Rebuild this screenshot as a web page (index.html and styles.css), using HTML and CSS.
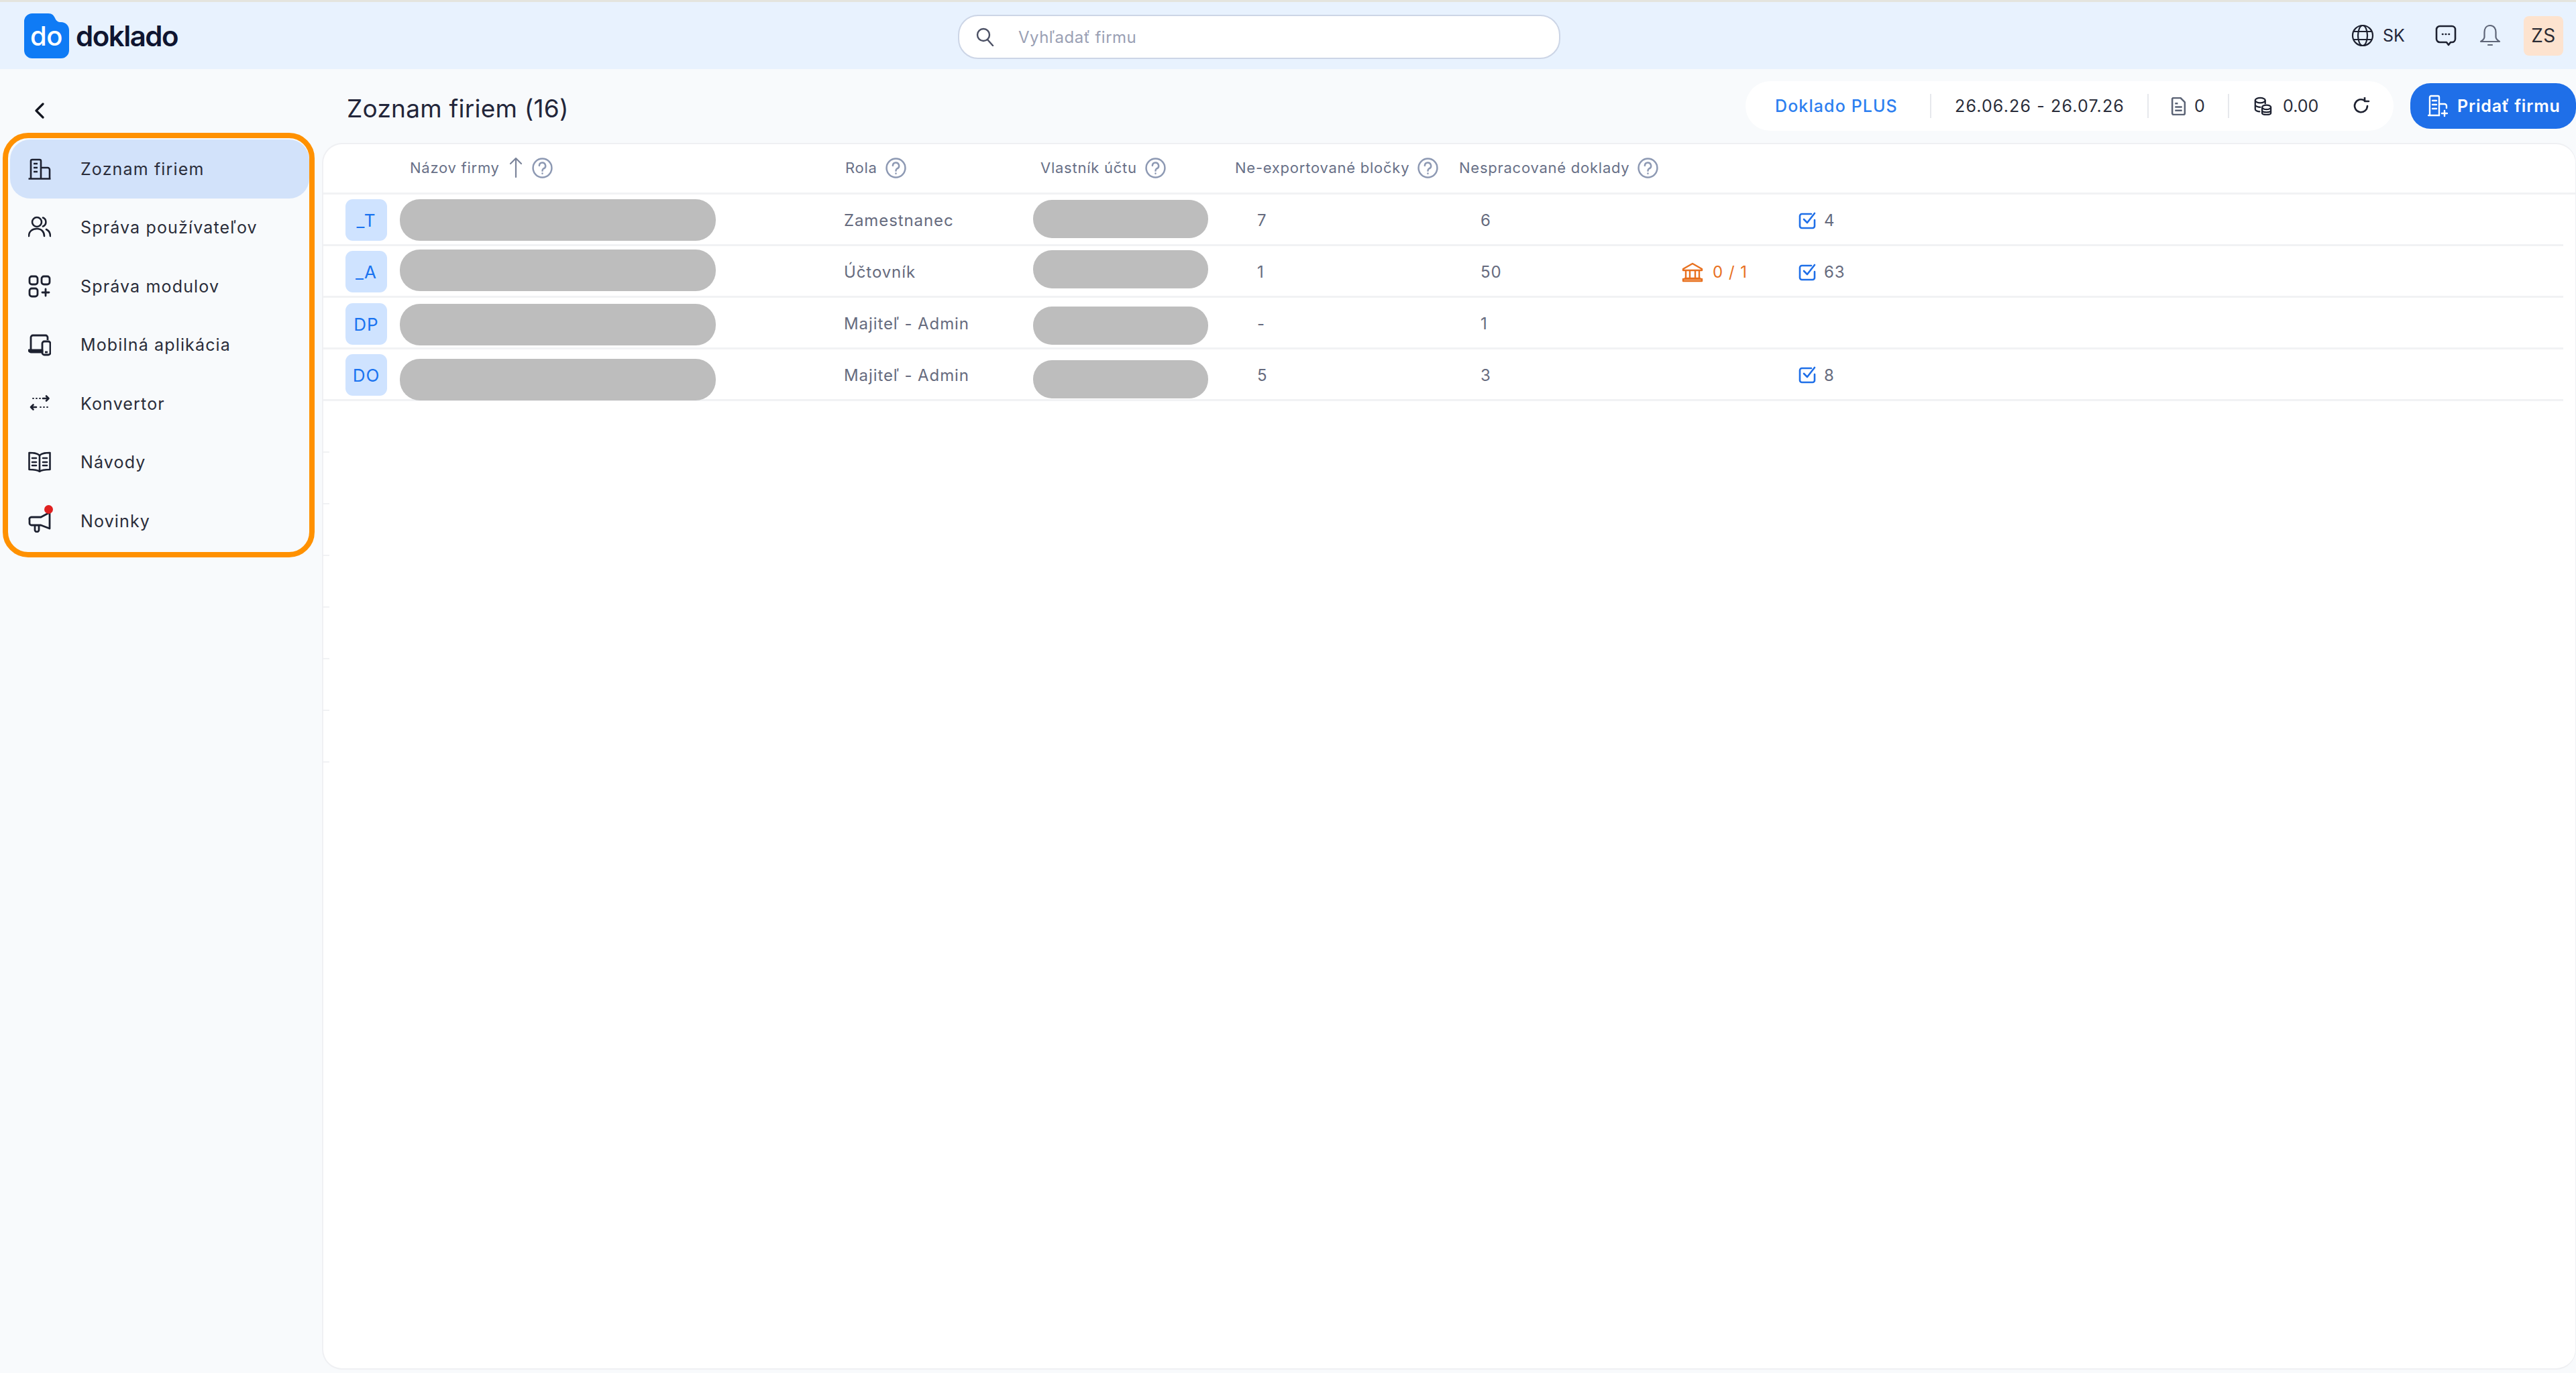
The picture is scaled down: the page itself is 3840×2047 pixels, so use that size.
FILE: index.html
```html
<!DOCTYPE html>
<html lang="sk">
<head>
<meta charset="utf-8">
<title>Doklado</title>
<link rel="stylesheet" href="styles.css">
</head>
<body>
<div class="app">
  <header class="topbar">
    <div class="brand">
      <svg class="logo" viewBox="0 0 67 67"><path d="M12 0H36C42 0 44 3 46 7C48 11 50 13 55 13C62 13 67 18 67 25V55A12 12 0 0 1 55 67H12A12 12 0 0 1 0 55V12A12 12 0 0 1 12 0Z" fill="#0f7bf5"/><text x="33" y="48" text-anchor="middle" class="logo-do">do</text></svg>
      <span class="brand-name">doklado</span>
    </div>
    <div class="search">
      <svg class="search-icon" viewBox="0 0 28 28" fill="none" stroke="#4b5064" stroke-width="2.4" stroke-linecap="round"><circle cx="12" cy="11" r="9"/><path d="M18 18L26 27"/></svg>
      <span class="search-text">Vyhľadať firmu</span>
    </div>
    <div class="top-actions">
      <svg class="ic-globe" viewBox="0 0 34 34" fill="none" stroke="#1d2130" stroke-width="2.2"><circle cx="17" cy="17" r="15"/><ellipse cx="17" cy="17" rx="7" ry="15"/><path d="M3 11H31M3 23H31"/></svg>
      <span class="lang">SK</span>
      <svg class="ic-chat" viewBox="0 0 32 32" fill="none" stroke="#1d2130" stroke-width="2.6" stroke-linejoin="round"><path d="M7 2H25A5 5 0 0 1 30 7V21A5 5 0 0 1 25 26H23L20 30L17 26H7A5 5 0 0 1 2 21V7A5 5 0 0 1 7 2Z"/><path d="M11 14H11.5M15.7 14H16.2M20.5 14H21" stroke-linecap="round"/></svg>
      <svg class="ic-bell" viewBox="0 0 34 34" fill="none" stroke="#5f6678" stroke-width="2.2" stroke-linejoin="round" stroke-linecap="round"><path d="M17 2C11 2 8.500 7 8.500 12V19C8.500 22 6 24 3 26H31C28 24 25.500 22 25.500 19V12C25.500 7 23 2 17 2Z"/><path d="M14 31H20"/></svg>
      <span class="user-badge">ZS</span>
    </div>
  </header>
  <div class="body">
    <aside class="sidebar">
      <div class="back-row">
        <svg class="ic-back" viewBox="0 0 16 24" fill="none" stroke="#12151f" stroke-width="3.2" stroke-linecap="round" stroke-linejoin="round"><path d="M13 2L3 12L13 22"/></svg>
      </div>
      <nav class="menu">
        <a class="menu-item active">
          <svg class="menu-icon" viewBox="0 0 34 34" fill="none" stroke="#1d2130" stroke-width="2.6"><path d="M4 31V5A2 2 0 0 1 6 3H17A2 2 0 0 1 19 5V31M19 15H29A3 3 0 0 1 32 18V31M0.500 31.500H33.500M8 9H14M8 15H14M8 21H14"/></svg>
          <span>Zoznam firiem</span>
        </a>
        <a class="menu-item">
          <svg class="menu-icon" viewBox="0 0 34 34" fill="none" stroke="#1d2130" stroke-width="2.6" stroke-linecap="round"><circle cx="13" cy="9" r="7"/><path d="M22 2.500A7 7 0 0 1 22 15.500M1 30C1 23 6 19 13 19C20 19 24 24 24 30M27 20C31 22 33 25 33 30"/></svg>
          <span>Správa používateľov</span>
        </a>
        <a class="menu-item">
          <svg class="menu-icon" viewBox="0 0 34 34" fill="none" stroke="#1d2130" stroke-width="2.8" stroke-linecap="round"><rect x="2" y="2" width="12" height="12" rx="3.500"/><rect x="20" y="2" width="12" height="12" rx="3.500"/><rect x="2" y="20" width="12" height="12" rx="3.500"/><path d="M21 26H31M26 21V31"/></svg>
          <span>Správa modulov</span>
        </a>
        <a class="menu-item">
          <svg class="menu-icon" viewBox="0 0 34 34" fill="none" stroke="#1d2130" stroke-width="2.8" stroke-linejoin="round"><path d="M4 24V6A3 3 0 0 1 7 3H26A3 3 0 0 1 29 6V10M1 25H21V28H4A3 3 0 0 1 1 25Z"/><rect x="21" y="12" width="12" height="20" rx="3"/><path d="M25 28H29"/></svg>
          <span>Mobilná aplikácia</span>
        </a>
        <a class="menu-item">
          <svg class="menu-icon" viewBox="0 0 34 34" fill="none" stroke="#1d2130" stroke-width="2.6" stroke-linecap="round" stroke-linejoin="round"><path d="M22 9H30M27 5.500L30.500 9L27 12.500M12 22H4M7.500 18.500L4 22L7.500 25.500"/><path d="M7 9H8M12 9H13M17 9H18M18 22H19M23 22H24M28 22H29" stroke-width="1.800"/></svg>
          <span>Konvertor</span>
        </a>
        <a class="menu-item">
          <svg class="menu-icon" viewBox="0 0 34 34" fill="none" stroke="#1d2130" stroke-width="2.6" stroke-linejoin="round" stroke-linecap="round"><path d="M17 7C13 3 7 3 1.500 3V28C7 28 13 28 17 31C21 28 27 28 32.500 28V3C27 3 21 3 17 7ZM17 7V31"/><path d="M6 11H12M6 17H12M6 22H12M22 11H28M22 17H28M22 22H28"/></svg>
          <span>Návody</span>
        </a>
        <a class="menu-item">
          <span class="icon-wrap">
            <svg class="menu-icon" viewBox="0 0 34 34" fill="none" stroke="#1d2130" stroke-width="2.800" stroke-linejoin="round"><path d="M32 4V28L19 23H5A3 3 0 0 1 2 20V15A3 3 0 0 1 5 11H19Z"/><path d="M10 23V30A3 3 0 0 0 16 30V23"/></svg>
            <i class="red-dot"></i>
          </span>
          <span>Novinky</span>
        </a>
      </nav>
    </aside>
    <main class="main">
      <div class="main-head">
        <h1 class="title">Zoznam firiem (16)</h1>
        <div class="stats">
          <span class="stat plus">Doklado PLUS</span>
          <span class="stat date">26.06.26 - 26.07.26</span>
          <span class="stat count">
            <svg class="ic-doc" viewBox="0 0 22 26" fill="none" stroke="#5a6274" stroke-width="2.400" stroke-linejoin="round"><path d="M3 1H14L20 7V23A2 2 0 0 1 18 25H4A2 2 0 0 1 2 23V2Z"/><path d="M6 9H10M6 14H16M6 19H16" stroke-width="2.400"/></svg>
            <span>0</span>
          </span>
          <span class="stat credits">
            <svg class="ic-coins" viewBox="0 0 30 30" fill="none" stroke="#1d2130" stroke-width="2.400"><ellipse cx="11" cy="6" rx="8" ry="4"/><path d="M3 6V20C3 22 6 24 11 24M19 6V12M3 13C3 15 7 17 12 17"/><ellipse cx="21" cy="17" rx="7" ry="3.500"/><path d="M14 17V26C14 28 17 29 21 29C25 29 28 28 28 26V17M14 22C14 24 17 25 21 25C25 25 28 24 28 22"/></svg>
            <span>0.00</span>
          </span>
          <svg class="ic-refresh" viewBox="0 0 26 26" fill="none" stroke="#1d2130" stroke-width="2.600" stroke-linecap="round" stroke-linejoin="round"><path d="M22 13A9.500 9.500 0 1 1 18 5"/><path d="M18 0V6H24"/></svg>
        </div>
        <button class="add-btn">
          <svg class="ic-add" viewBox="0 0 30 34" fill="none" stroke="#fff" stroke-width="2.400" stroke-linecap="round"><path d="M3 31V4A2 2 0 0 1 5 2H15A2 2 0 0 1 17 4V31H1M17 14H25A3 3 0 0 1 28 17V20M7 9H13M7 15H13M7 21H13"/><path d="M21 28H29M25 24V32"/></svg>
          <span>Pridať firmu</span>
        </button>
      </div>
      <section class="card">
        <div class="grid-row head">
          <div class="th th-name">Názov firmy
            <svg class="ic-sort" viewBox="0 0 20 32" fill="none" stroke="#7b849a" stroke-width="2.200" stroke-linecap="round" stroke-linejoin="round"><path d="M10 30V2M2 10L10 2L18 10"/></svg>
            <svg class="ic-help" viewBox="0 0 30 30" fill="none" stroke="#8d99b3" stroke-width="2.400" stroke-linecap="round"><circle cx="15" cy="15" r="13.500"/><path d="M10.500 11.500A4.500 4.500 0 1 1 16.500 16C15 17 15 18 15 19M15 22.800V23"/></svg>
          </div>
          <div class="th">Rola
            <svg class="ic-help" viewBox="0 0 30 30" fill="none" stroke="#8d99b3" stroke-width="2.400" stroke-linecap="round"><circle cx="15" cy="15" r="13.500"/><path d="M10.500 11.500A4.500 4.500 0 1 1 16.500 16C15 17 15 18 15 19M15 22.800V23"/></svg>
          </div>
          <div class="th th-owner">Vlastník účtu
            <svg class="ic-help" viewBox="0 0 30 30" fill="none" stroke="#8d99b3" stroke-width="2.400" stroke-linecap="round"><circle cx="15" cy="15" r="13.500"/><path d="M10.500 11.500A4.500 4.500 0 1 1 16.500 16C15 17 15 18 15 19M15 22.800V23"/></svg>
          </div>
          <div class="th">Ne-exportované bločky
            <svg class="ic-help" viewBox="0 0 30 30" fill="none" stroke="#8d99b3" stroke-width="2.400" stroke-linecap="round"><circle cx="15" cy="15" r="13.500"/><path d="M10.500 11.500A4.500 4.500 0 1 1 16.500 16C15 17 15 18 15 19M15 22.800V23"/></svg>
          </div>
          <div class="th">Nespracované doklady
            <svg class="ic-help" viewBox="0 0 30 30" fill="none" stroke="#8d99b3" stroke-width="2.400" stroke-linecap="round"><circle cx="15" cy="15" r="13.500"/><path d="M10.500 11.500A4.500 4.500 0 1 1 16.500 16C15 17 15 18 15 19M15 22.800V23"/></svg>
          </div>
        </div>

        <div class="grid-row item r1">
          <span class="avatar">_T</span>
          <span class="redact name"></span>
          <span class="cell role">Zamestnanec</span>
          <span class="redact owner"></span>
          <span class="cell num">7</span>
          <span class="cell num2">6</span>
          <span class="cell"></span>
          <span class="cell task"><svg class="ic-check" viewBox="0 0 26 26" fill="none" stroke="#1f6fe8" stroke-width="2.600" stroke-linecap="round" stroke-linejoin="round"><path d="M19 3H5A3 3 0 0 0 2 6V21A3 3 0 0 0 5 24H21A3 3 0 0 0 24 21V12"/><path d="M8 11L13 16L24 2"/></svg>4</span>
        </div>
        <div class="grid-row item r2">
          <span class="avatar">_A</span>
          <span class="redact name"></span>
          <span class="cell role">Účtovník</span>
          <span class="redact owner"></span>
          <span class="cell num">1</span>
          <span class="cell num2">50</span>
          <span class="cell bank"><svg class="ic-bank" viewBox="0 0 32 30" fill="none" stroke="#e8701e" stroke-width="2.400" stroke-linejoin="round"><path d="M16 2L30 10V12H2V10Z"/><path d="M6 12V24M12 12V24M20 12V24M26 12V24M4 24H28M2 28H30V25H2Z"/></svg>0 / 1</span>
          <span class="cell task"><svg class="ic-check" viewBox="0 0 26 26" fill="none" stroke="#1f6fe8" stroke-width="2.600" stroke-linecap="round" stroke-linejoin="round"><path d="M19 3H5A3 3 0 0 0 2 6V21A3 3 0 0 0 5 24H21A3 3 0 0 0 24 21V12"/><path d="M8 11L13 16L24 2"/></svg>63</span>
        </div>
        <div class="grid-row item r3">
          <span class="avatar">DP</span>
          <span class="redact name"></span>
          <span class="cell role">Majiteľ - Admin</span>
          <span class="redact owner"></span>
          <span class="cell num">-</span>
          <span class="cell num2">1</span>
        </div>
        <div class="grid-row item r4">
          <span class="avatar">DO</span>
          <span class="redact name"></span>
          <span class="cell role">Majiteľ - Admin</span>
          <span class="redact owner"></span>
          <span class="cell num">5</span>
          <span class="cell num2">3</span>
          <span class="cell"></span>
          <span class="cell task"><svg class="ic-check" viewBox="0 0 26 26" fill="none" stroke="#1f6fe8" stroke-width="2.600" stroke-linecap="round" stroke-linejoin="round"><path d="M19 3H5A3 3 0 0 0 2 6V21A3 3 0 0 0 5 24H21A3 3 0 0 0 24 21V12"/><path d="M8 11L13 16L24 2"/></svg>8</span>
        </div>
        <div class="ticks">
          <i class="tick"></i><i class="tick"></i><i class="tick"></i><i class="tick"></i><i class="tick"></i><i class="tick"></i><i class="tick"></i>
        </div>
      </section>
    </main>
  </div>
</div>
</body>
</html>
```
FILE: styles.css
```css
* { box-sizing: border-box; }
html, body { margin: 0; padding: 0; height: 100%; overflow: hidden; }
body { font-family: Inter, "Liberation Sans", sans-serif; background: #f8fafc; color: #2a2d3a; }
.app { height: 2047px; display: flex; flex-direction: column; border-top: 3px solid #e4e4de; }

/* top bar */
.topbar { height: 100px; flex: none; background: #e8f2fe; display: flex; align-items: center; position: relative; }
.brand { display: flex; align-items: center; width: 1428px; padding-left: 36px; gap: 10px; }
.logo { width: 67px; height: 67px; flex: none; margin-top: 0; }
.logo-do { font: 500 40px Inter, sans-serif; fill: #fff; letter-spacing: -.5px; }
.brand-name { font-size: 42px; font-weight: 600; letter-spacing: -1.5px; color: #0f1530; }
.search { width: 898px; height: 66px; margin-top: 4px; background: #fff; border: 2px solid #ccd5e6; border-radius: 30px; display: flex; align-items: center; padding-left: 24px; }
.search-icon { width: 28px; height: 28px; flex: none; }
.search-text { margin-left: 36px; font-size: 24px; color: #9aa0b4; letter-spacing: .5px; }
.top-actions { margin-left: auto; display: flex; align-items: center; padding-right: 19px; }
.ic-globe { width: 34px; height: 34px; }
.lang { margin-left: 13px; font-size: 25px; color: #23263a; width: 45px; }
.ic-chat { width: 32px; height: 32px; margin-left: 33px; }
.ic-bell { width: 34px; height: 34px; margin-left: 33px; }
.user-badge { width: 59px; height: 59px; margin-left: 33px; background: #fde3cf; border-radius: 8px; display: flex; align-items: center; justify-content: center; font-size: 28px; color: #2b2b33; letter-spacing: .5px; }

/* layout */
.body { flex: 1; display: flex; min-height: 0; }
.sidebar { width: 480px; flex: none; padding-left: 4px; }
.back-row { height: 95px; padding: 50px 0 0 47px; }
.ic-back { width: 16px; height: 24px; display: block; }
.menu { width: 465px; height: 633px; border: 8px solid #ff9100; border-radius: 38px; padding: 2px 0 0 3px; }
.menu-item { height: 87.5px; display: flex; align-items: center; padding-left: 27px; gap: 44px; border-radius: 30px; font-size: 25px; letter-spacing: 1.15px; color: #2a2d3a; }
.menu-item.active { background: #d2e2fa; }
.menu-icon { width: 34px; height: 34px; flex: none; display: block; }
.icon-wrap { position: relative; display: block; width: 34px; height: 34px; flex: none; }
.red-dot { position: absolute; right: -3px; top: -7px; width: 13px; height: 13px; background: #e02020; border-radius: 50%; }

/* main */
.main { flex: 1; min-width: 0; display: flex; flex-direction: column; padding-bottom: 5px; }
.main-head { height: 110px; flex: none; display: flex; align-items: flex-start; }
.title { margin: 36px 0 0 37px; font-size: 37px; font-weight: 400; color: #23263a; letter-spacing: .25px; line-height: 46px; }
.stats { margin: 18px 25px 0 auto; width: 966px; height: 74px; background: #fff; border-radius: 37px; display: flex; align-items: center; padding-left: 44px; font-size: 25px; color: #2a2d3a; flex: none; }
.stat { display: flex; align-items: center; height: 36px; border-right: 2px solid #e6e8ec; }
.plus { width: 233px; color: #2d7ff0; font-weight: 500; letter-spacing: 1.1px; }
.date { width: 324px; padding-left: 35px; letter-spacing: 1.15px; }
.count { width: 120px; padding-left: 33px; gap: 12px; }
.credits { width: 184px; padding-left: 36px; gap: 16px; border-right: 0; flex: none; }
.ic-doc { width: 23px; height: 27px; flex: none; }
.ic-coins { width: 28px; height: 28px; flex: none; }
.ic-refresh { width: 26px; height: 26px; margin-left: 0; flex: none; }
.add-btn { width: 247px; height: 68px; margin-top: 21px; border: 0; border-radius: 30px; background: #1f6fe8; color: #fff; display: flex; align-items: center; padding: 0 0 0 26px; gap: 14px; font: 600 25px Inter, sans-serif; letter-spacing: .8px; flex: none; }
.ic-add { width: 30px; height: 34px; flex: none; }

/* card */
.card { flex: 1; background: #fff; border: 2px solid #eff0f3; border-right-width: 1px; border-radius: 30px; min-height: 0; }
.grid-row { display: grid; grid-template-columns: 81px 664px 280px 301px 334px 332px 174px 1fr; padding-left: 33px; }
.head { height: 75px; border-bottom: 3px solid #f1f2f4; grid-template-columns: 745px 280px 301px 334px 332px; align-items: center; padding-bottom: 2px; }
.th { display: flex; align-items: center; gap: 12px; font-size: 22px; color: #687087; letter-spacing: .75px; white-space: nowrap; }
.th-name { padding-left: 96px; gap: 14px; }
.th-owner { padding-left: 11px; }
.ic-sort { width: 20px; height: 32px; flex: none; }
.ic-help { width: 31px; height: 31px; flex: none; }
.item { height: 77px; margin-right: 18px; border-bottom: 3px solid #f1f2f4; align-items: center; }
.avatar { width: 62px; height: 62px; background: #cfe3ff; border-radius: 11px; display: flex; align-items: center; justify-content: center; font-size: 26px; color: #1a73f0; align-self: start; margin-top: 7px; letter-spacing: 1px; }
.redact { display: block; background: #bdbdbd; align-self: start; position: relative; z-index: 1; }
.redact.name { width: 471px; height: 62px; border-radius: 30px; }
.redact.owner { width: 261px; height: 57px; border-radius: 28px; }
.r1 .redact.name { margin-top: 7px; }
.r2 .redact.name { margin-top: 5px; }
.r3 .redact.name { margin-top: 9px; }
.r4 .redact.name { margin-top: 14px; }
.r1 .redact.owner { margin-top: 8px; }
.r2 .redact.owner { margin-top: 6px; }
.r3 .redact.owner { margin-top: 13px; }
.r4 .redact.owner { margin-top: 16px; }
.r3 .avatar { margin-top: 8px; }
.cell { font-size: 24px; color: #666b7e; letter-spacing: .9px; display: flex; align-items: center; margin-top: 3px; }
.r4 .cell { margin-top: 0; }
.role { margin-left: -2px; }
.num { padding-left: 33px; }
.num2 { padding-left: 32px; }
.bank { color: #e8701e; gap: 14px; letter-spacing: 1px; }
.task { gap: 12px; }
.ic-bank { width: 32px; height: 30px; flex: none; }
.ic-check { width: 26px; height: 26px; flex: none; }

.ticks { display: flex; flex-direction: column; }
.tick { display: block; width: 9px; height: 77px; border-bottom: 2px solid #f1f2f4; }
```
